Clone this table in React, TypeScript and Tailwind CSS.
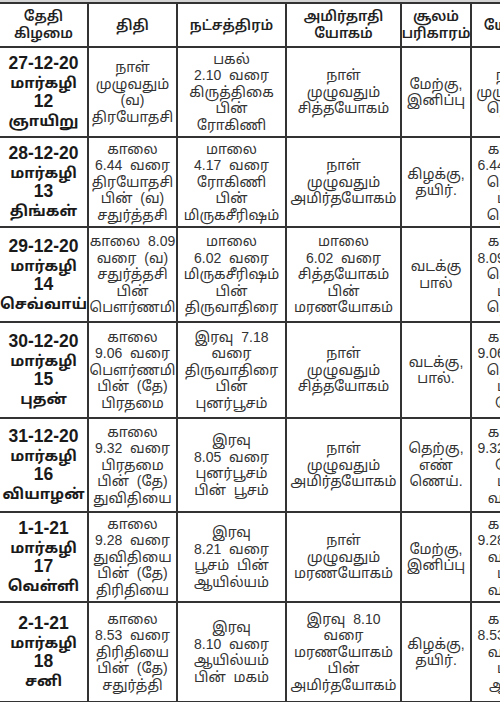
type Row = {
  h: string;
  date: string[];
  thithi: string[];
  star: string[];
  amirtha: string[];
  soolam: string[];
  last: string[];
};

const rows: Row[] = [
  {
    h: "h-[90px]",
    date: ["27-12-20", "மார்கழி", "12", "ஞாயிறு"],
    thithi: ["நாள்", "முழுவதும்", "(வ)", "திரயோதசி"],
    star: ["பகல்", "2.10  வரை", "கிருத்திகை", "பின்", "ரோகிணி"],
    amirtha: ["நாள்", "முழுவதும்", "சித்தயோகம்"],
    soolam: ["மேற்கு,", "இனிப்பு"],
    last: ["நாள்", "முழுவதும்", "தெய்வ"],
  },
  {
    h: "h-[90px]",
    date: ["28-12-20", "மார்கழி", "13", "திங்கள்"],
    thithi: ["காலை", "6.44  வரை", "திரயோதசி", "பின்  (வ)", "சதுர்த்தசி"],
    star: ["மாலை", "4.17  வரை", "ரோகிணி", "பின்", "மிருகசீரிஷம்"],
    amirtha: ["நாள்", "முழுவதும்", "அமிர்தயோகம்"],
    soolam: ["கிழக்கு,", "தயிர்."],
    last: ["காலை", "6.44 வரை", "தெய்வ", "பின்", "தெய்வ"],
  },
  {
    h: "h-[95px]",
    date: ["29-12-20", "மார்கழி", "14", "செவ்வாய்"],
    thithi: ["காலை  8.09", "வரை  (வ)", "சதுர்த்தசி", "பின்", "பௌர்ணமி"],
    star: ["மாலை", "6.02  வரை", "மிருகசீரிஷம்", "பின்", "திருவாதிரை"],
    amirtha: ["மாலை", "6.02  வரை", "சித்தயோகம்", "பின்", "மரணயோகம்"],
    soolam: ["வடக்கு", "பால்"],
    last: ["காலை", "8.09 வரை", "தெய்வ", "பின்", "தெய்வ"],
  },
  {
    h: "h-[96px]",
    date: ["30-12-20", "மார்கழி", "15", "புதன்"],
    thithi: ["காலை", "9.06  வரை", "பௌர்ணமி", "பின்  (தே)", "பிரதமை"],
    star: ["இரவு  7.18", "வரை", "திருவாதிரை", "பின்", "புனர்பூசம்"],
    amirtha: ["நாள்", "முழுவதும்", "சித்தயோகம்"],
    soolam: ["வடக்கு,", "பால்."],
    last: ["காலை", "9.06 வரை", "தெய்வ", "பின்", "தேவ"],
  },
  {
    h: "h-[94px]",
    date: ["31-12-20", "மார்கழி", "16", "வியாழன்"],
    thithi: ["காலை", "9.32  வரை", "பிரதமை", "பின்  (தே)", "துவிதியை"],
    star: ["இரவு", "8.05  வரை", "புனர்பூசம்", "பின்  பூசம்"],
    amirtha: ["நாள்", "முழுவதும்", "அமிர்தயோகம்"],
    soolam: ["தெற்கு,", "எண்", "ணெய்."],
    last: ["காலை", "9.32 வரை", "தேவ", "பின்", "வடக்கு"],
  },
  {
    h: "h-[90px]",
    date: ["1-1-21", "மார்கழி", "17", "வெள்ளி"],
    thithi: ["காலை", "9.28  வரை", "துவிதியை", "பின்  (தே)", "திரிதியை"],
    star: ["இரவு", "8.21  வரை", "பூசம்  பின்", "ஆயில்யம்"],
    amirtha: ["நாள்", "முழுவதும்", "மரணயோகம்"],
    soolam: ["மேற்கு,", "இனிப்பு"],
    last: ["காலை", "9.28 வரை", "வடக்கு", "பின்", "வடக்கு"],
  },
  {
    h: "h-[100px]",
    date: ["2-1-21", "மார்கழி", "18", "சனி"],
    thithi: ["காலை", "8.53  வரை", "திரிதியை", "பின்  (தே)", "சதுர்த்தி"],
    star: ["இரவு", "8.10  வரை", "ஆயில்யம்", "பின்  மகம்"],
    amirtha: ["இரவு  8.10", "வரை", "மரணயோகம்", "பின்", "அமிர்தயோகம்"],
    soolam: ["கிழக்கு,", "தயிர்."],
    last: ["காலை", "8.53 வரை", "வடக்கு", "பின்", "ஆகாச"],
  },
];

const font = {
  fontFamily:
    '"Liberation Sans", "Noto Sans Tamil", "Lohit Tamil", "Latha", sans-serif',
};

function Lines({ items, head }: { items: string[]; head?: boolean }) {
  const cls = head
    ? "whitespace-pre text-[14px] leading-[17px] font-semibold text-[#222]"
    : "whitespace-pre text-[14px] leading-[16.5px] font-normal text-[#333]";
  return (
    <div className="flex flex-col items-center">
      {items.map((t, i) => (
        <span key={i} className={cls}>
          {t}
        </span>
      ))}
    </div>
  );
}

function DateLines({ items }: { items: string[] }) {
  return (
    <div className="flex flex-col items-center text-[#1a1a1a] font-bold">
      {items.map((t, i) => (
        <span
          key={i}
          className={
            /\d/.test(t)
              ? "whitespace-pre text-[17.5px] leading-[19px]"
              : "whitespace-pre text-[15px] leading-[19px]"
          }
        >
          {t}
        </span>
      ))}
    </div>
  );
}

const cell =
  "border-2 border-[#333] text-center align-middle px-0 overflow-hidden";

export default function App() {
  return (
    <div className="w-[500px] h-[702px] overflow-hidden bg-white" style={font}>
      <div className="h-[3px] bg-[#d4d4d4]" />
      <table className="table-fixed border-collapse w-[556px] -ml-[2px] -mt-[1px]">
        <colgroup>
          <col className="w-[89px]" />
          <col className="w-[89px]" />
          <col className="w-[109px]" />
          <col className="w-[115px]" />
          <col className="w-[70px]" />
          <col className="w-[84px]" />
        </colgroup>
        <thead>
          <tr className="h-[44px]">
            <th className={cell}>
              <Lines items={["தேதி", "கிழமை"]} head />
            </th>
            <th className={cell}>
              <Lines items={["திதி"]} head />
            </th>
            <th className={cell}>
              <Lines items={["நட்சத்திரம்"]} head />
            </th>
            <th className={cell}>
              <Lines items={["அமிர்தாதி", "யோகம்"]} head />
            </th>
            <th className={cell}>
              <Lines items={["சூலம்", "பரிகாரம்"]} head />
            </th>
            <th className={cell}>
              <Lines items={["யோகம்"]} head />
            </th>
          </tr>
        </thead>
        <tbody>
          {rows.map((r, i) => (
            <tr key={i} className={r.h}>
              <td className={cell}>
                <DateLines items={r.date} />
              </td>
              <td className={cell}>
                <Lines items={r.thithi} />
              </td>
              <td className={cell}>
                <Lines items={r.star} />
              </td>
              <td className={cell}>
                <Lines items={r.amirtha} />
              </td>
              <td className={cell}>
                <Lines items={r.soolam} />
              </td>
              <td className={cell}>
                <Lines items={r.last} />
              </td>
            </tr>
          ))}
        </tbody>
      </table>
    </div>
  );
}
